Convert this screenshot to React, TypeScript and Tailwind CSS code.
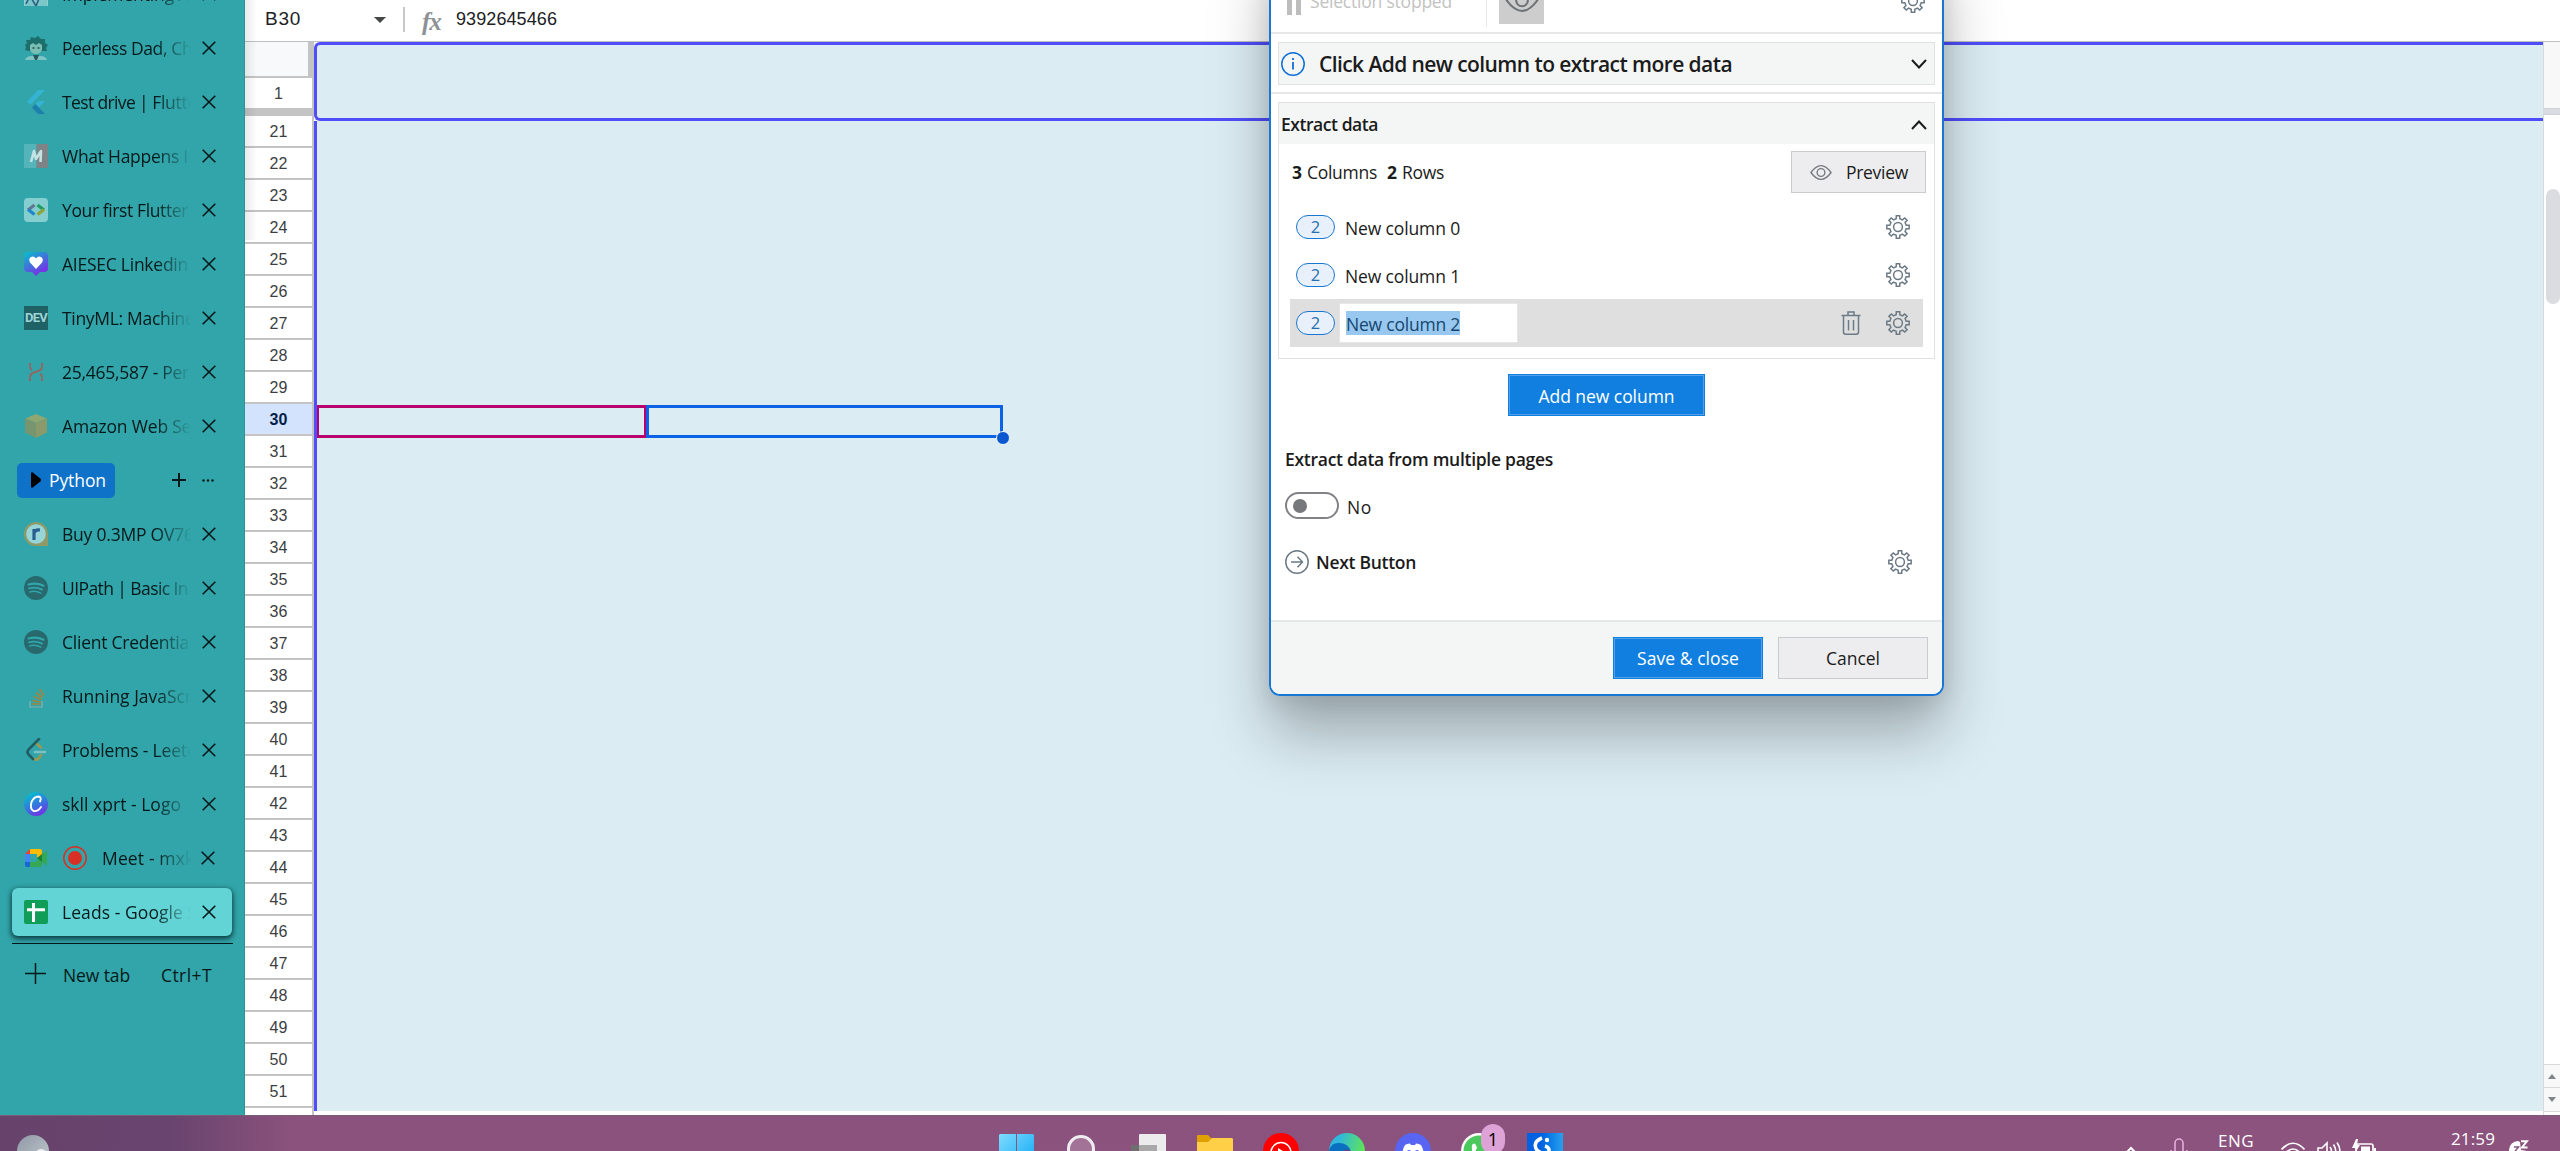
import { useLayoutEffect, useRef, useState, type ReactNode } from "react";

/* Text whose letter spacing is adjusted so that it spans exactly `w` pixels. */
function Fit({ w, className = "", children }: { w: number; className?: string; children: string }) {
  const ref = useRef<HTMLSpanElement>(null);
  const [ls, setLs] = useState(0);
  useLayoutEffect(() => {
    if (ref.current) setLs((w - ref.current.getBoundingClientRect().width) / children.length);
  }, [w, children]);
  return (
    <span ref={ref} className={`inline-block whitespace-pre ${className}`} style={{ letterSpacing: `${ls}px` }}>
      {children}
    </span>
  );
}

const gearPath = (() => {
  const pts: string[] = [];
  for (let i = 0; i < 8; i++) {
    const a = (i * Math.PI) / 4 - Math.PI / 2;
    for (const [r, d] of [[8.4, -0.22], [11.3, -0.15], [11.3, 0.15], [8.4, 0.22]]) {
      pts.push(`${(12 + r * Math.cos(a + d)).toFixed(2)} ${(12 + r * Math.sin(a + d)).toFixed(2)}`);
    }
  }
  return `M${pts.join("L")}Z`;
})();

function Gear({ className = "" }: { className?: string }) {
  return (
    <svg viewBox="0 0 24 24" className={`size-6 shrink-0 ${className}`} fill="none" stroke="#6c7a86" strokeWidth="1.500" strokeLinejoin="miter">
      <path d={gearPath} />
      <circle cx="12" cy="12" r="4.400" />
    </svg>
  );
}

function Eye({ className = "" }: { className?: string }) {
  return (
    <svg viewBox="0 0 24 18" className={className} fill="none" stroke="currentColor" strokeWidth="1.500">
      <path d="M1 9C5 3.500 8.500 1.500 12 1.500S19 3.500 23 9C19 14.500 15.500 16.500 12 16.500S5 14.500 1 9Z" strokeLinejoin="round" />
      <circle cx="12" cy="9" r="4.200" />
    </svg>
  );
}

function Chevron({ up = false }: { up?: boolean }) {
  return (
    <svg viewBox="0 0 16 10" className="h-[10px] w-4" fill="none" stroke="#1b1b1b" strokeWidth="2">
      <path d={up ? "M1 9L8 1.500L15 9" : "M1 1L8 8.500L15 1"} />
    </svg>
  );
}

function Ico({ children }: { children: ReactNode }) {
  return <svg viewBox="0 0 24 24" className="size-6 shrink-0">{children}</svg>;
}

const Spotify = (
  <Ico>
    <circle cx="12" cy="12" r="12" fill="#27696d" />
    <g fill="none" stroke="#31a5a9" strokeLinecap="round">
      <path d="M4.500 8.500C10 7 15 7.500 19.500 9.700" strokeWidth="2.200" />
      <path d="M5 12.300C10 11 14 11.500 18 13.600" strokeWidth="1.900" />
      <path d="M5.800 15.900C10 14.800 13.500 15.400 16.800 17.200" strokeWidth="1.500" />
    </g>
  </Ico>
);

/* `title` spans `w` pixels; `rest` is the part that fades away beneath the close button. */
type Tab = { title: string; w: number; rest?: string; icon: ReactNode; pre?: ReactNode; active?: boolean };

const tabsTop: Tab[] = [
  {
    title: "Implementing",
    w: 112,
    rest: " A",
    icon: <Ico><rect x="0.500" y="0.500" width="23" height="24" fill="#7ac6c9" stroke="#8fd0d2" /><path d="M2 22L6 14L12 24L17 12" fill="none" stroke="#2c5f80" strokeWidth="1.600" /></Ico>,
  },
  {
    title: "Peerless Dad,",
    w: 105,
    rest: " Ch",
    icon: (
      <Ico>
        <path d="M1 9L3 7L2 4L6 4L7 1L11 2L14 0L17 3L21 3L21 7L24 9L22 12L23 15L19 15L5 15L1 14L2 11Z" fill="#1d6f6c" />
        <path d="M6 9L9 7L12 9L15 7L18 9L18 14Q16 18 12 18Q8 18 6 14Z" fill="#79bdb5" />
        <path d="M8.500 12H10.500M13.500 12H15.500" stroke="#1d4f50" strokeWidth="1.500" />
        <path d="M1 24Q2 20 8 20L16 20Q22 20 23 24Z" fill="#7fc4c4" />
        <path d="M9 19H15L13 24H11Z" fill="#27565c" />
      </Ico>
    ),
  },
  {
    title: "Test drive |",
    w: 86,
    rest: " Flutte",
    icon: <Ico><path d="M14 0H21L6.500 15L3 11.500Z" fill="#35b3d3" /><path d="M14 11H21L15 17.500L11.500 14Z" fill="#35b3d3" /><path d="M8 17.500L11.500 14L21 24H14Z" fill="#1d7fae" /></Ico>,
  },
  {
    title: "What Happens",
    w: 117,
    rest: " I",
    icon: <Ico><rect width="12.500" height="24" fill="#55b4b9" /><rect x="12.500" width="11.500" height="24" fill="#7d8488" /><path d="M7 18L10 7L12 15L17 7L16.500 18" fill="none" stroke="#c3e3e4" strokeWidth="2.600" strokeLinejoin="round" /></Ico>,
  },
  {
    title: "Your first Flutter",
    w: 126,
    icon: (
      <Ico>
        <rect width="24" height="24" rx="4" fill="#85ced0" />
        <g fill="none" strokeWidth="3.200">
          <path d="M10.500 7L4 12" stroke="#5f7890" /><path d="M4 11.500L10.500 16.500" stroke="#1e86c9" />
          <path d="M13.500 7L20 12" stroke="#1d9d63" /><path d="M20 11.500L13.500 16.500" stroke="#8ea437" />
        </g>
      </Ico>
    ),
  },
  {
    title: "AIESEC Linkedin",
    w: 126,
    icon: (
      <Ico>
        <defs><linearGradient id="aie" x1="0" y1="0" x2="0.600" y2="1"><stop stopColor="#00c4cc" /><stop offset="1" stopColor="#7d2ae8" /></linearGradient></defs>
        <path d="M4 0H20Q24 0 24 4V16Q24 20 20 20H16L12 24L8 20H4Q0 20 0 16V4Q0 0 4 0Z" fill="url(#aie)" />
        <path d="M12 17L6 10.500Q4 7 7 5Q10 3.500 12 6.500Q14 3.500 17 5Q20 7 18 10.500Z" fill="#fff" />
      </Ico>
    ),
  },
  {
    title: "TinyML: Machin",
    w: 123,
    rest: "e",
    icon: <span className="flex size-6 shrink-0 items-center justify-center bg-[#1f6265] font-['Roboto',sans-serif] text-[13px] font-bold tracking-[-0.8px] text-[#9dd4d6]">DEV</span>,
  },
  {
    title: "25,465,587 - Per",
    w: 127,
    icon: <Ico><path d="M6 3V7Q6 9 8 10M18 3V7Q18 10 14 11L9 13Q6 14 6 17V21M18 21V17Q18 15 16 14" fill="none" stroke="#8f6a64" strokeWidth="2" /></Ico>,
  },
  {
    title: "Amazon Web",
    w: 106,
    rest: " Se",
    icon: <Ico><path d="M12 0L23 4.500L12 9L1 4.500Z" fill="#8da672" /><path d="M1 4.500L12 9V24L1 18.500Z" fill="#77966f" /><path d="M23 4.500L12 9V24L23 18.500Z" fill="#8a9a6a" /></Ico>,
  },
];

const tabsBottom: Tab[] = [
  {
    title: "Buy 0.3MP OV7",
    w: 122,
    rest: "6",
    icon: (
      <Ico>
        <path d="M12 0A12 12 0 1 0 12 24H24V12A12 12 0 0 0 12 0Z" fill="#8f9a66" />
        <circle cx="12" cy="12" r="9.800" fill="#97d5d8" />
        <path d="M10 18V7M10 11Q11 7.500 16 8" stroke="#27608f" strokeWidth="3.200" fill="none" />
      </Ico>
    ),
  },
  { title: "UIPath | Basic In", w: 126, icon: Spotify },
  { title: "Client Credentia", w: 127, icon: Spotify },
  {
    title: "Running JavaSc",
    w: 123,
    rest: "r",
    icon: <Ico><path d="M6 17V23H18V17" fill="none" stroke="#6fabac" strokeWidth="1.700" /><path d="M8 20H16.500M8.300 16.500L16.600 18M9.500 12.500L17.300 15.500M12 8.500L18.300 13.500M15.500 5L20 11.500" stroke="#a4853c" strokeWidth="1.600" /></Ico>,
  },
  {
    title: "Problems - Leet",
    w: 125,
    rest: "c",
    icon: (
      <Ico>
        <g fill="none" strokeWidth="2.600" strokeLinecap="round">
          <path d="M17 17L15 20Q12.500 23 9.500 20.500" stroke="#9a9a4c" />
          <path d="M12.500 5.500L17 9.500" stroke="#9a9a4c" />
          <path d="M15 1L4.500 11.500Q2.500 14 4.500 16.500L9 21" stroke="#205c62" />
          <path d="M11 14H21" stroke="#7dbfc2" />
        </g>
      </Ico>
    ),
  },
  {
    title: "skll xprt - Logo",
    w: 119,
    icon: (
      <Ico>
        <defs><linearGradient id="cnv" x1="0.200" y1="0" x2="0.700" y2="1"><stop stopColor="#00c4cc" /><stop offset="0.600" stopColor="#3a6fe0" /><stop offset="1" stopColor="#7d2ae8" /></linearGradient></defs>
        <circle cx="12" cy="12" r="12" fill="url(#cnv)" />
        <path d="M16 9.500Q18 5 14.500 4.500Q10 4.500 7.500 10Q5.500 17 9.500 19Q13.500 20 17 15" fill="none" stroke="#fff" strokeWidth="1.900" strokeLinecap="round" />
      </Ico>
    ),
  },
  {
    title: "Meet - mx",
    w: 83,
    rest: "k",
    pre: <Ico><circle cx="12" cy="12" r="11.200" fill="none" stroke="#d93025" strokeWidth="1.500" /><circle cx="12" cy="12" r="7" fill="#d93025" /></Ico>,
    icon: (
      <Ico>
        <path d="M1 8L6 3V8Z" fill="#ea4335" /><path d="M1 8H6V16H1Z" fill="#4285f4" /><path d="M1 16H6V21H3Q1 21 1 19Z" fill="#1967d2" />
        <path d="M6 3H16Q18 3 18 5V10L13 12V8H6Z" fill="#fbbc04" /><path d="M6 16H13V12L18 15V19Q18 21 16 21H6Z" fill="#34a853" />
        <path d="M13 12L18 8V16Z" fill="#188038" /><path d="M18 8L23 4.500V19.500L18 16Z" fill="#34a853" />
      </Ico>
    ),
  },
  {
    title: "Leads - Google",
    w: 121,
    rest: " S",
    active: true,
    icon: <Ico><rect width="24" height="24" rx="2" fill="#0f9d58" /><path d="M3 9.800H21M9.500 3V22" stroke="#fff" strokeWidth="3" /></Ico>,
  },
];

function Cross() {
  return (
    <svg viewBox="0 0 14 14" className="size-[14px]" stroke="#06191a" strokeWidth="1.600">
      <path d="M0.700 0.700L13.300 13.300M13.300 0.700L0.700 13.300" />
    </svg>
  );
}

function TabRow({ title, w, rest = "", icon, pre, active }: Tab) {
  return (
    <div className="flex h-[54px] items-center pl-3">
      <div className={`flex h-12 w-[220px] items-center rounded-md pl-3 ${active ? "bg-[#62d4d5] shadow-[0_2px_5px_1px_rgba(0,30,35,0.75)]" : ""}`}>
        {icon}
        {pre && <div className="ml-[15px]">{pre}</div>}
        <div className={`overflow-hidden whitespace-nowrap text-[17.5px] text-[#06191a] [mask-image:linear-gradient(to_right,black_calc(100%-36px),transparent)] ${pre ? "ml-[15px] w-[89px]" : "ml-[14px] w-[129px]"}`}>
          <Fit w={w}>{title}</Fit>
          {rest && <span className="whitespace-pre tracking-[-0.3px]">{rest}</span>}
        </div>
        <div className={`mb-[1px] ${pre ? "ml-[10px]" : "ml-[11px]"}`}><Cross /></div>
      </div>
    </div>
  );
}

function Sidebar() {
  return (
    <aside className="h-full w-[245px] shrink-0 overflow-hidden border-r border-[#289599] bg-[#31a5a9]">
      <div className="-mt-[33px]">
        {tabsTop.map((t) => <TabRow key={t.title} {...t} />)}
        <div className="flex h-[54px] items-center pl-[17px]">
          <div className="flex h-[35px] w-[98px] items-center rounded-[5px] bg-[#0e72c9] pl-[14px] text-white">
            <svg viewBox="0 0 10 16" className="h-4 w-[10px]"><path d="M0 1.500Q0 0 1.500 0.300L9.500 6.800Q10.500 8 9.500 9.200L1.500 15.700Q0 16 0 14.500Z" fill="#000" /></svg>
            <Fit w={57} className="ml-[8px] text-[17.5px]">Python</Fit>
          </div>
          <svg viewBox="0 0 14 14" className="ml-[57px] size-[14px]" stroke="#06191a" strokeWidth="2"><path d="M0 7H14M7 0V14" /></svg>
          <svg viewBox="0 0 12 3" className="ml-4 h-[3px] w-3" fill="#06191a"><circle cx="1.500" cy="1.500" r="1.200" /><circle cx="6" cy="1.500" r="1.200" /><circle cx="10.500" cy="1.500" r="1.200" /></svg>
        </div>
        {tabsBottom.map((t) => <TabRow key={t.title} {...t} />)}
      </div>
      <div className="ml-3 mt-[4px] h-px w-[221px] bg-[#06191a]" />
      <div className="flex h-[63px] items-center pl-[25px] text-[17.5px] text-[#06191a]">
        <svg viewBox="0 0 21 21" className="-mt-[5px] size-[21px]" stroke="#06191a" strokeWidth="1.500"><path d="M0 10.500H21M10.500 0V21" /></svg>
        <Fit w={67} className="ml-[17px]">New tab</Fit>
        <Fit w={51} className="ml-[31px]">Ctrl+T</Fit>
      </div>
    </aside>
  );
}

function RowHeader({ n }: { n: number }) {
  const on = n === 30;
  return (
    <div className={`flex h-8 shrink-0 items-center justify-center border-b-2 border-[#c4c4c4] pt-[2px] text-[16px] ${on ? "bg-[#d3e3fd] font-bold text-[#041e49]" : "bg-white text-[#3c4043]"}`}>
      {n}
    </div>
  );
}

function Sheet() {
  return (
    <div className="relative flex h-full min-w-0 grow flex-col bg-white font-['Liberation_Sans',Arial,sans-serif]">
      <div className="flex h-[42px] shrink-0 items-center border-b border-[#c0c0c0] pb-[2px]">
        <Fit w={36} className="ml-[20px] text-[19px] text-[#202124]">B30</Fit>
        <svg viewBox="0 0 12 6" className="ml-[73px] h-[6px] w-3"><path d="M0 0H12L6 6Z" fill="#444746" /></svg>
        <div className="ml-[17px] h-[25px] w-[2px] bg-[#c7c7c7]" />
        <span className="ml-[17px] w-[22px] pt-1 font-['Liberation_Serif',serif] text-[25px] font-bold italic leading-none tracking-[-1px] text-[#8d9196]">fx</span>
        <Fit w={101} className="ml-[12px] text-[18px] text-[#202124]">9392645466</Fit>
      </div>
      <div className="flex min-h-0 grow">
        <div className="flex w-[69px] shrink-0 flex-col overflow-hidden border-r-2 border-[#c4c4c4]">
          <div className="h-[36px] shrink-0 border-b-2 border-r-4 border-[#c4c4c4] bg-[#f8f9fa]" />
          <div className="flex h-[30px] shrink-0 items-center justify-center pt-[2px] text-[16px] text-[#3c4043]">1</div>
          <div className="h-2 shrink-0 bg-[#c4c4c4]" />
          {Array.from({ length: 31 }, (_, i) => <RowHeader key={i} n={21 + i} />)}
        </div>
        <div className="flex min-w-0 grow flex-col pb-1">
          <div className="h-[79px] shrink-0 rounded-l-[6px] border-y-3 border-l-3 border-[#504dfa] bg-[#dbecf3]" />
          <div className="relative min-h-0 grow border-l-3 border-[#504dfa] bg-[#dbecf3]">
            <div className="absolute left-0 top-[284px] h-[33px] w-[329px] border-y-3 border-l-2 border-r-2 border-[#b8006e]" />
            <div className="absolute left-[329px] top-[284px] h-[33px] w-[357px] border-3 border-[#0b62e4]" />
            <div className="absolute left-[679px] top-[310px] size-[14px] rounded-full border border-[#eef7fb] bg-[#0b57d0]" />
          </div>
        </div>
        <div className="flex w-[17px] shrink-0 flex-col border-l border-[#dadada] bg-white">
          <div className="h-[66px] shrink-0 bg-[#f8f8f8]" />
          <div className="h-[7px] shrink-0 border-y border-[#d0d3d6] bg-[#dadce4]" />
          <div className="ml-[2px] mt-[74px] h-[115px] w-[14px] shrink-0 rounded-full bg-[#dadce0]" />
          <div className="grow" />
          <div className="flex h-6 items-center justify-center border-y border-[#d8d8d8] bg-[#f8f8f8]"><svg viewBox="0 0 8 5" className="h-[5px] w-2"><path d="M4 0L8 5H0Z" fill="#80868b" /></svg></div>
          <div className="mb-[3px] flex h-6 items-center justify-center border-b border-[#d8d8d8] bg-[#f8f8f8]"><svg viewBox="0 0 8 5" className="h-[5px] w-2"><path d="M0 0H8L4 5Z" fill="#80868b" /></svg></div>
        </div>
      </div>
      <div className="absolute left-0 top-0 h-[240px] w-3 bg-linear-to-r from-black/8 to-transparent" />
    </div>
  );
}

function Pill() {
  return <div className="flex h-6 w-[39px] shrink-0 items-center justify-center rounded-full border border-[#1976d2] bg-[#e8f1fb] text-[16.5px] text-[#2a6db0]">2</div>;
}

function Dialog() {
  return (
    <div className="absolute left-[1269px] top-[-60px] flex h-[756px] w-[675px] flex-col overflow-hidden rounded-[11px] border-2 border-[#1976d2] bg-white text-[17.5px] text-[#1b1b1b]">
      <div className="flex h-[92px] shrink-0 items-center border-b-2 border-[#e6e7e8] pl-[16px]">
        <div className="flex gap-1 self-start pt-[45px]"><div className="h-[28px] w-[5px] bg-[#bdbdbd]" /><div className="h-[28px] w-[5px] bg-[#bdbdbd]" /></div>
        <Fit w={142} className="ml-[9px] mt-[29px] text-[#c2c2c2]">Selection stopped</Fit>
        <div className="ml-[34px] mt-[34px] h-[46px] w-px bg-[#e8e8e8]" />
        <div className="ml-[12px] mt-[29px] flex h-[45px] w-[45px] items-center justify-center bg-[#cdcdcd]">
          <Eye className="mt-[-2px] h-[25px] w-[34px] text-[#6f7276]" />
        </div>
        <Gear className="ml-[357px] mt-[28px]" />
      </div>
      <div className="h-[60px] shrink-0 border-b-2 border-[#e6e7e8] px-[7px] pt-2">
        <div className="flex h-[43px] items-center border border-[#e0e2e2] bg-[#f4f6f6] pl-[2px] pr-[7px]">
          <svg viewBox="0 0 24 24" className="size-6" fill="none" stroke="#0f6fd8" strokeWidth="1.500"><circle cx="12" cy="12" r="11.200" /><path d="M12 10V17.500M12 6V8" strokeWidth="1.800" /></svg>
          <Fit w={413} className="ml-[14px] mt-[2px] text-[21px] font-semibold">Click Add new column to extract more data</Fit>
          <div className="grow" />
          <Chevron />
        </div>
      </div>
      <div className="mx-[7px] mt-2 flex h-[257px] shrink-0 flex-col border border-[#e0e2e2]">
        <div className="flex h-[41px] items-center bg-[#f4f6f6] pl-[2px] pr-[7px] pt-[2px]">
          <Fit w={97} className="font-semibold">Extract data</Fit>
          <div className="grow" />
          <Chevron up />
        </div>
        <div className="mt-[7px] flex h-[42px] items-center pl-[13px] pr-2">
          <Fit w={11} className="font-bold">3</Fit>
          <Fit w={70} className="ml-[4px]">Columns</Fit>
          <Fit w={11} className="ml-[10px] font-bold">2</Fit>
          <Fit w={42} className="ml-[4px]">Rows</Fit>
          <div className="grow" />
          <div className="flex h-[42px] w-[135px] items-center border border-[#c9cbcd] bg-[#ededef] pl-[18px]">
            <Eye className="h-[17px] w-[22px] text-[#76797d]" />
            <Fit w={62} className="ml-[14px]">Preview</Fit>
          </div>
        </div>
        <div className="mt-[10px] flex flex-col px-[11px]">
          {[0, 1].map((n) => (
            <div key={n} className="flex h-12 items-center pl-[6px] pr-[13px]">
              <Pill />
              <Fit w={115} className="ml-[10px] mt-[2px]">{`New column ${n}`}</Fit>
              <div className="grow" />
              <Gear />
            </div>
          ))}
          <div className="flex h-12 items-center bg-[#dfdfdf] pl-[6px] pr-[13px]">
            <Pill />
            <div className="ml-1 flex h-10 w-[179px] items-center border border-[#e6e6e6] bg-white pl-[6px]">
              <span className="flex h-6 items-center bg-[#98c8ef] pt-[2px] text-[#16466f]"><Fit w={114}>New column 2</Fit></span>
            </div>
            <div className="grow" />
            <svg viewBox="0 0 20 24" className="mr-[25px] h-6 w-5" fill="none" stroke="#6c7a86" strokeWidth="1.500"><path d="M0.500 4.500H19.500M7 4V1H13V4M2.500 4.500V21Q2.500 23.200 4.700 23.200H15.300Q17.500 23.200 17.500 21V4.500M7.500 9V19.500M12.500 9V19.500" /></svg>
            <Gear />
          </div>
        </div>
      </div>
      <div className="mt-[15px] flex justify-center">
        <div className="flex h-[42px] w-[197px] items-center justify-center border border-[#0f7fe0] bg-[#117fe0] pt-[3px] text-white shadow-[inset_0_0_0_1px_#4fa0e8]"><Fit w={136}>Add new column</Fit></div>
      </div>
      <div className="mt-[29px] flex h-[28px] items-center pl-[14px]"><Fit w={268} className="font-semibold">Extract data from multiple pages</Fit></div>
      <div className="mt-[18px] flex h-[29px] items-center pl-[14px]">
        <div className="flex h-[27px] w-[54px] items-center rounded-full border-2 border-[#808285] pl-[6px]"><div className="size-[14px] rounded-full bg-[#76787b]" /></div>
        <Fit w={25} className="ml-[8px] mt-[3px]">No</Fit>
      </div>
      <div className="mt-[30px] flex h-6 items-center pl-[14px] pr-[30px]">
        <svg viewBox="0 0 24 24" className="size-6" fill="none" stroke="#6c7a86" strokeWidth="1.500"><circle cx="12" cy="12" r="11.200" /><path d="M6 12H17M12.500 6.800L17.500 12L12.500 17.200" /></svg>
        <Fit w={100} className="ml-[7px] font-semibold">Next Button</Fit>
        <div className="grow" />
        <Gear />
      </div>
      <div className="grow" />
      <div className="flex h-[74px] shrink-0 justify-end gap-[15px] border-t-2 border-[#e6e7e8] bg-[#f4f6f6] pr-[14px] pt-[15px]">
        <div className="flex h-[42px] w-[150px] items-center justify-center border border-[#0f7fe0] bg-[#117fe0] text-white shadow-[inset_0_0_0_1px_#4fa0e8]"><Fit w={102}>Save & close</Fit></div>
        <div className="flex h-[42px] w-[150px] items-center justify-center border border-[#c9cbcd] bg-[#ededef]"><Fit w={54}>Cancel</Fit></div>
      </div>
    </div>
  );
}

function Taskbar() {
  return (
    <footer className="flex h-9 shrink-0 items-start overflow-hidden border-t border-[#7d5b78] bg-[linear-gradient(to_right,#67436c_0px,#68446e_170px,#8a527c_290px,#8b537d_100%)] font-['Open_Sans',sans-serif] text-[17px] text-white">
      <svg viewBox="0 0 32 32" className="ml-[17px] mt-[19px] size-8 shrink-0">
        <defs><linearGradient id="moon" x1="0" y1="0" x2="1" y2="1"><stop stopColor="#8f99a5" /><stop offset="1" stopColor="#c3c9cf" /></linearGradient></defs>
        <circle cx="16" cy="16" r="16" fill="url(#moon)" /><circle cx="24" cy="20" r="6" fill="#eef1f4" />
      </svg>
      <svg viewBox="0 0 36 36" className="ml-[950px] mt-[18px] size-9 shrink-0">
        <defs><linearGradient id="win" x1="0" y1="0" x2="1" y2="1"><stop stopColor="#7fdcff" /><stop offset="1" stopColor="#0aa5f2" /></linearGradient></defs>
        <path d="M1 0H17V17H0V1ZM18 0H34L35 1V17H18ZM0 18H17V35H0ZM18 18H35V35H18Z" fill="url(#win)" />
      </svg>
      <svg viewBox="0 0 32 36" className="ml-[31px] mt-[18px] h-9 w-8 shrink-0"><circle cx="15" cy="15" r="12.500" fill="#a27397" stroke="#f0edf0" strokeWidth="3" /></svg>
      <svg viewBox="0 0 36 36" className="ml-[33px] mt-[18px] size-9 shrink-0"><rect x="8" width="27" height="27" rx="1" fill="#ececec" /><rect y="11" width="26" height="24" fill="#6e6e6e" /><rect x="8" y="11" width="18" height="18" fill="#a9a9a9" /></svg>
      <svg viewBox="0 0 36 36" className="ml-[30px] mt-[19px] size-9 shrink-0"><path d="M0 1Q0 0 1 0H11L15 4V9H0Z" fill="#e0a000" /><path d="M0 7H11L15 3H35L36 4V36H0Z" fill="#ffcf48" /></svg>
      <svg viewBox="0 0 36 36" className="ml-[30px] mt-[17px] size-9 shrink-0"><circle cx="18" cy="18" r="18" fill="#f00" /><circle cx="18" cy="19.500" r="10" fill="none" stroke="#fff" strokeWidth="1.500" /><path d="M15 15L23 20L15 25Z" fill="#fff" /></svg>
      <svg viewBox="0 0 36 36" className="ml-[30px] mt-[17px] size-9 shrink-0">
        <defs><linearGradient id="edg" x1="0" y1="0" x2="1" y2="0.300"><stop offset="0.300" stopColor="#2fb8dc" /><stop offset="1" stopColor="#5fe35a" /></linearGradient></defs>
        <circle cx="18" cy="18" r="18" fill="url(#edg)" /><path d="M0 18Q2 9 11 10Q21 11 22 20L14 18Q10 22 13 30L2 26Z" fill="#0c70c0" /><path d="M14 18Q17 15 22 18L23 24H14Z" fill="#6a4470" />
      </svg>
      <svg viewBox="0 0 36 36" className="ml-[30px] mt-[17px] size-9 shrink-0"><circle cx="18" cy="18" r="18" fill="#5865f2" /><path d="M10 12Q12 10.500 15 10.500L16 12H20L21 10.500Q24 10.500 26 12Q29 17 29 24L24 26H12L7 24Q7 17 10 12Z" fill="#fff" /><circle cx="14" cy="19" r="2" fill="#5865f2" /><circle cx="22" cy="19" r="2" fill="#5865f2" /></svg>
      <div className="relative ml-[30px] mt-[17px] size-9 shrink-0">
        <svg viewBox="0 0 36 36" className="size-9"><circle cx="18" cy="18" r="18" fill="#fff" /><circle cx="18" cy="18" r="15.500" fill="#4bc95c" /><path d="M11 12Q13 9 15 12L16 15L14.500 17.500Q17 22 21 23L24 21V26H16Q10 21 11 12Z" fill="#fff" /></svg>
        <div className="absolute left-[20px] top-[-9px] flex h-[30px] w-6 items-center justify-center rounded-full bg-[#dda3d6] text-[18px] text-black">1</div>
      </div>
      <div className="ml-[30px] mt-[17px] h-9 w-9 shrink-0 bg-linear-to-r from-[#0062e0] from-40% to-[#2aa0ee]">
        <svg viewBox="0 0 36 36" className="size-9"><path d="M15 5Q7 8 8.500 14Q9 18 15 20" fill="none" stroke="#fff" strokeWidth="3.500" /><circle cx="20" cy="7" r="2.200" fill="#fff" /><path d="M18 13Q24 15 21 20" fill="none" stroke="#fff" strokeWidth="3.500" /></svg>
      </div>
      <svg viewBox="0 0 14 8" className="ml-[561px] mt-[30px] h-2 w-[14px] shrink-0" fill="none" stroke="#fff" strokeWidth="2"><path d="M1 8L7 2L13 8" /></svg>
      <svg viewBox="0 0 18 24" className="ml-[32px] mt-[22px] h-6 w-[18px] shrink-0" fill="none" stroke="#e9b3e2" strokeWidth="1.500"><rect x="5" y="1" width="8" height="15" rx="4" /><path d="M1 12Q2 20 9 20Q16 20 17 12" /></svg>
      <Fit w={36} className="ml-[30px] mt-[12px]">ENG</Fit>
      <svg viewBox="0 0 24 20" className="ml-[27px] mt-[26px] h-5 w-6 shrink-0" fill="none" stroke="#fff" strokeWidth="1.700"><path d="M0.500 7.500Q12 -5 23.500 7.500M4 11.500Q12 2.500 20 11.500" /></svg>
      <svg viewBox="0 0 24 20" className="ml-[12px] mt-[25px] h-5 w-6 shrink-0" fill="none" stroke="#fff" strokeWidth="1.600"><path d="M1 7H5L10 2V18L5 13H1ZM13 6Q16 10 13 14M16.500 3.500Q21 10 16.500 16.500M20 1.500Q26 10 20 18.500" /></svg>
      <svg viewBox="0 0 26 20" className="ml-[11px] mt-[23px] h-5 w-[26px] shrink-0"><rect x="4" y="5" width="17" height="13" rx="2" fill="none" stroke="#fff" strokeWidth="1.700" /><rect x="9" y="7.500" width="9" height="9" fill="#fff" /><path d="M22 9H24V14H22Z" fill="#fff" /><path d="M4 0L0 9H4L3 14L8 6H5L6 0Z" fill="#fff" /></svg>
      <Fit w={44} className="ml-[73px] mt-[10px]">21:59</Fit>
      <svg viewBox="0 0 20 20" className="ml-[14px] mt-[24px] size-5 shrink-0"><path d="M9 1A9 9 0 1 0 18 11L12 10L11 2Z" fill="#fff" /><path d="M12 1.200H18L13 7.500H18.500" fill="none" stroke="#fff" strokeWidth="1.900" /><path d="M5 7H9.500L5.500 12H10" fill="none" stroke="#8b537d" strokeWidth="1.500" /></svg>
    </footer>
  );
}

export default function App() {
  return (
    <div className="relative flex h-[1151px] w-[2560px] flex-col overflow-hidden bg-white font-['Open_Sans','Noto_Sans',sans-serif] leading-normal">
      <div className="flex h-[1115px] shrink-0 overflow-hidden">
        <Sidebar />
        <Sheet />
      </div>
      <Taskbar />
      <div className="absolute left-[1269px] top-[-60px] h-[756px] w-[675px] rounded-[11px] shadow-[0_38px_60px_rgba(0,0,0,0.28),0_6px_24px_rgba(0,0,0,0.1)]" />
      <Dialog />
    </div>
  );
}
